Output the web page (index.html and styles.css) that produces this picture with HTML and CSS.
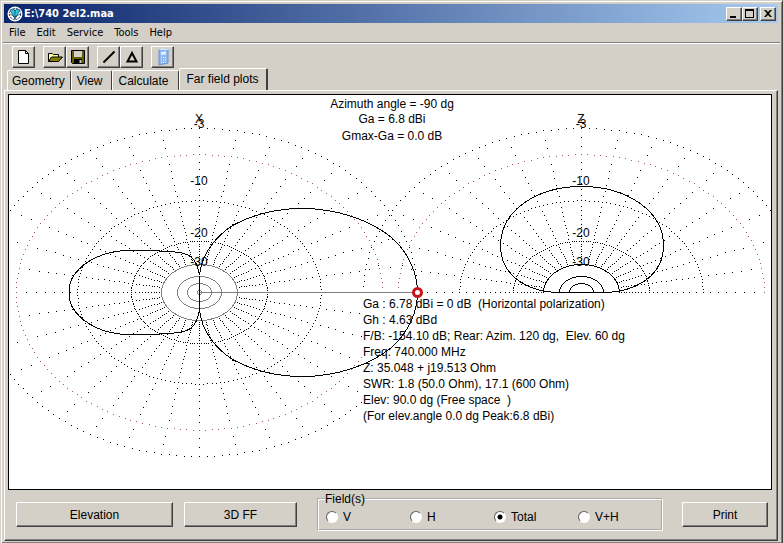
FILE: index.html
```html
<!DOCTYPE html>
<html lang="en">
<head>
    <meta charset="utf-8">
    <title>E:\740 2el2.maa</title>
    <link rel="stylesheet" href="styles.css">
</head>
<body>
<div class="window">
    <header class="titlebar">
        <svg class="app-icon" width="16" height="16" viewBox="0 0 16 16">
            <circle cx="8" cy="8" r="7.5" fill="#fff"/>
            <circle cx="8" cy="8" r="5.6" fill="none" stroke="#235" stroke-width="1" stroke-dasharray="2 1"/>
            <path d="M3 4l5 9 5-9-3-1-2 2-2-2z" fill="#2cc4e4" stroke="#145" stroke-width=".7"/>
            <path d="M8 3v10M3 8l5 3 5-3" fill="none" stroke="#145" stroke-width=".7"/>
        </svg>
        <h1>E:\740 2el2.maa</h1>
        <div class="window-buttons">
            <button type="button" aria-label="Minimize"><svg width="12" height="10"><path d="M2 7h6v2h-6z"/></svg></button>
            <button type="button" aria-label="Maximize"><svg width="12" height="10"><path fill-rule="evenodd" d="M1 0h9v9h-9zM2 2v6h7v-6z"/></svg></button>
            <button type="button" class="close" aria-label="Close"><svg width="12" height="10"><path d="M2 1h2l2 2 2-2h2l-3 3.5 3 3.500h-2l-2-2-2 2h-2l3-3.500z"/></svg></button>
        </div>
    </header>

    <nav class="menu">
        <button type="button">File</button>
        <button type="button">Edit</button>
        <button type="button">Service</button>
        <button type="button">Tools</button>
        <button type="button">Help</button>
    </nav>

    <div class="toolbar">
        <div class="group">
            <button type="button" aria-label="New"><svg width="16" height="16"><path d="M2.500 1.500h7l3 3v10h-10z" fill="#fff" stroke="#000"/><path d="M9.500 1.500v3h3" fill="none" stroke="#000"/></svg></button>
        </div>
        <div class="group">
            <button type="button" aria-label="Open"><svg width="16" height="16"><path d="M1.500 12.500v-8h4l1 1h5v3" fill="#ffffa0" stroke="#000"/><path d="M1.500 12.500l3-4.500h11l-4 4.500z" fill="#808000" stroke="#000"/></svg></button>
            <button type="button" aria-label="Save"><svg width="16" height="16"><path d="M1.500 1.500h13v13h-12l-1-1z" fill="#606000" stroke="#000"/><path d="M4 2h8v6h-8z" fill="#d4d0c8"/><path d="M4 10h8v4h-8z"/><path d="M9.500 11h2v3h-2z" fill="#d4d0c8"/></svg></button>
        </div>
        <div class="group">
            <button type="button" aria-label="Wire"><svg width="16" height="16"><path d="M2.500 13.500l11-11" stroke="#000" stroke-width="2"/></svg></button>
            <button type="button" aria-label="Loop"><svg width="16" height="16"><path d="M8 4l4.500 8.500h-9z" fill="none" stroke="#000" stroke-width="2"/></svg></button>
        </div>
        <div class="group">
            <button type="button" aria-label="Calculator"><svg width="16" height="18"><path d="M4 2l9-1v14l-9 2z" fill="#8fb8ee" stroke="#6890d0"/><path d="M4 2l2-1.500h8l-1 1.500z" fill="#d0e4ff"/><path d="M6 4l5-.5v3l-5 .5z" fill="#dff0ff"/><path d="M6 9.500h5M6 12h5M6 14.500h5" stroke="#e4f2ff" stroke-dasharray="1 1"/></svg></button>
        </div>
    </div>

    <div class="tabs" role="tablist">
        <button type="button" role="tab">Geometry</button>
        <button type="button" role="tab">View</button>
        <button type="button" role="tab">Calculate</button>
        <button type="button" role="tab" class="active" aria-selected="true">Far field plots</button>
    </div>

    <main class="page">
        <svg class="plot" viewBox="0 0 762 394">
            <!-- dotted dB grids, filled in by plot.js -->
            <g class="grid">
                <path id="gridDots"/>
                <path id="refDots" class="ref"/>
            </g>
            <rect class="info-bg" x="353" y="202" width="252" height="126"/>

            <!-- azimuth -->
            <g class="trace" transform="translate(190.500 197.500)">
                <g class="core">
                    <ellipse rx="38" ry="28"/>
                    <ellipse rx="22" ry="16"/>
                    <ellipse rx="12" ry="9"/>
                    <circle r="2"/>
                    <path d="M0 0H218"/>
                </g>
                <path d="M0-17V17"/>
                <path d="M0-17C2-40 18-57 33-67C55-79 78-84 103-84C136-84 170-73 192-55C210-39 218-18 218 0C218 18 210 39 192 55C170 73 136 84 103 84C78 84 55 79 33 67C18 57 2 40 0 17"/>
                <path d="M0-17C-1-24-4-32-9-36C-18-42-30-40-44-42C-62-43-82-43-96-38C-116-31-130-17-130-4V4C-130 17-116 31-96 38C-82 43-62 43-44 42C-30 40-18 42-9 36C-4 32-1 24 0 17"/>
            </g>

            <!-- elevation -->
            <g class="trace" transform="translate(572.500 197.500)">
                <path d="M-38 0A38 28 0 0 1 38 0M-22 0A22 16 0 0 1 22 0M-12 0A12 9 0 0 1 12 0"/>
                <path d="M-22 0C-50 0-81-14-81-47C-81-81-46-106 0-106C46-106 82-81 82-47C82-14 50 0 22 0Z"/>
            </g>

            <circle class="marker" cx="408.500" cy="197.500" r="4"/>

            <g class="label">
                <text x="190" y="28">X</text>
                <text x="190" y="33">-3</text>
                <text x="190" y="90">-10</text>
                <text x="190" y="142">-20</text>
                <text x="190" y="171">-30</text>
                <text x="572" y="28">Z</text>
                <text x="572" y="33">-3</text>
                <text x="572" y="90">-10</text>
                <text x="572" y="142">-20</text>
                <text x="572" y="171">-30</text>
                <text x="383" y="13">Azimuth angle = -90 dg</text>
                <text x="383" y="28">Ga = 6.8 dBi</text>
                <text x="383" y="45">Gmax-Ga = 0.0 dB</text>
            </g>

            <g class="info">
                <text x="354" y="213">Ga : 6.78 dBi = 0 dB  (Horizontal polarization)</text>
                <text x="354" y="229">Gh : 4.63 dBd</text>
                <text x="354" y="245">F/B: -154.10 dB; Rear: Azim. 120 dg,  Elev. 60 dg</text>
                <text x="354" y="261">Freq: 740.000 MHz</text>
                <text x="354" y="277">Z: 35.048 + j19.513 Ohm</text>
                <text x="354" y="293">SWR: 1.8 (50.0 Ohm), 17.1 (600 Ohm)</text>
                <text x="354" y="309">Elev: 90.0 dg (Free space  )</text>
                <text x="354" y="325">(For elev.angle 0.0 dg Peak:6.8 dBi)</text>
            </g>
        </svg>

        <div class="controls">
            <button type="button" class="btn wide">Elevation</button>
            <button type="button" class="btn">3D FF</button>
            <fieldset>
                <legend>Field(s)</legend>
                <label><input type="radio" name="field"> V</label>
                <label><input type="radio" name="field"> H</label>
                <label><input type="radio" name="field" checked> Total</label>
                <label><input type="radio" name="field"> V+H</label>
            </fieldset>
            <button type="button" class="btn small">Print</button>
        </div>
    </main>
</div>
<script src="plot.js"></script>
</body>
</html>
```
FILE: styles.css
```css
* {
    box-sizing: border-box;
}
body {
    margin: 0;
    background: #d4d0c8;
    color: #000;
    font: 12px "Liberation Sans", Arial, sans-serif;
}
button {
    margin: 0;
    padding: 0;
    background: #d4d0c8;
    color: #000;
    font: inherit;
    border: none;
}
.window {
    min-height: 100vh;
    padding: 2px;
    border: 1px solid #404040;
    border-top-color: #d4d0c8;
    border-left-color: #d4d0c8;
    box-shadow: inset 1px 1px #fff, inset -1px -1px #808080;
}

/* title bar */
.titlebar {
    display: flex;
    align-items: center;
    height: 19px;
    margin: 1px 2px 0 1px;
    padding: 0 2px 0 3px;
    background: linear-gradient(to right, #0a246a, #a6caf0);
}
.titlebar h1 {
    flex: 1;
    margin: 0 0 0 1px;
    color: #fff;
    font: bold 11px "DejaVu Sans Condensed", "DejaVu Sans", sans-serif;
}
.window-buttons {
    display: flex;
}
.window-buttons button {
    display: flex;
    align-items: center;
    justify-content: center;
    width: 16px;
    height: 14px;
    border: 1px solid #404040;
    border-top-color: #fff;
    border-left-color: #fff;
    box-shadow: inset -1px -1px #808080;
}
.window-buttons .close {
    margin-left: 2px;
}

.menu {
    display: flex;
    gap: 11px;
    height: 20px;
    padding-left: 6px;
    border-bottom: 1px solid #808080;
    box-shadow: 0 1px #fff;
}
.menu button {
    font: 11px "DejaVu Sans Condensed", "DejaVu Sans", sans-serif;
}

/* toolbar */
.toolbar {
    display: flex;
    gap: 8px;
    padding: 3px 0 0 9px;
}
.group {
    display: flex;
}
.toolbar button {
    display: flex;
    align-items: center;
    justify-content: center;
    width: 23px;
    height: 22px;
    border: 1px solid #404040;
    border-top-color: #fff;
    border-left-color: #fff;
    box-shadow: inset -1px -1px #808080;
}

/* tabs */
.tabs {
    display: flex;
    align-items: flex-end;
    height: 22px;
    padding-left: 4px;
}
.tabs button {
    height: 20px;
    padding: 0 9px 0 5px;
    border-top: 1px solid #fff;
    border-left: 1px solid #fff;
    border-right: 1px solid #404040;
    border-radius: 2px 2px 0 0;
}
.tabs button:first-child {
    padding: 0 5px 0 4px;
}
.tabs .active {
    height: 22px;
    padding: 0 7px 2px 7px;
    border-right-width: 2px;
}

.page {
    margin: 0 2px 0 1px;
    padding: 3px 5px 9px 3px;
    border: 1px solid #404040;
    border-top-color: #fff;
    border-left-color: #fff;
    box-shadow: inset -1px -1px #808080;
}

/* far field plot */
.plot {
    display: block;
    width: 100%;
    border: 1px solid #000;
    background: #fff;
}
.grid path {
    fill: #000;
    shape-rendering: crispEdges;
}
.grid .ref {
    fill: #a05060;
}
.info-bg {
    fill: #fff;
}
.trace {
    fill: none;
    stroke: #000;
    shape-rendering: crispEdges;
}
.core {
    stroke: #808080;
}
.marker {
    fill: #fff;
    stroke: #c8141e;
    stroke-width: 3;
}
.label {
    text-anchor: middle;
}
.info text {
    white-space: pre;
}

/* bottom row */
.controls {
    display: flex;
    align-items: flex-start;
    padding: 2px 4px 0 8px;
}
.btn {
    width: 113px;
    height: 25px;
    margin-top: 10px;
    border: 1px solid #404040;
    border-top-color: #fff;
    border-left-color: #fff;
    box-shadow: inset -1px -1px #808080;
}
.btn.wide {
    width: 157px;
    margin-right: 11px;
}
.btn.small {
    width: 86px;
}
fieldset {
    display: grid;
    flex: 1;
    grid-template-columns: repeat(4, 84px);
    min-width: 0;
    height: 39px;
    margin: 0 19px 0 20px;
    padding: 3px 8px 0 7px;
    border: 2px groove #fff;
}
legend {
    margin-left: -1px;
    padding: 0;
    line-height: 14px;
}
fieldset label {
    display: flex;
    align-items: center;
    gap: 5px;
    height: 16px;
}
input[type=radio] {
    appearance: none;
    width: 12px;
    height: 12px;
    margin: 0;
    border: 1px solid #fff;
    border-top-color: #606060;
    border-left-color: #606060;
    border-radius: 50%;
    background: #fff;
}
input[type=radio]:checked {
    background: radial-gradient(circle, #000 2px, #fff 3px);
}
```
FILE: plot.js
```js
// ARRL log scale: radius shrinks by 0.89 every 2 dB
function scale(db) {
    return Math.pow(0.89, db / 2);
}

var RX = 218, RY = 164;
var dots = '', ref = '';

function dot(cx, cy, db, deg) {
    var a = deg * Math.PI / 180;
    var x = Math.round(cx + RX * scale(db) * Math.cos(a));
    var y = Math.round(cy - RY * scale(db) * Math.sin(a));
    return 'M' + x + ' ' + y + 'h1v1h-1z';
}

function grid(cx, cy, sweep) {
    for (var a = 0; a <= sweep; a += 2) {
        dots += dot(cx, cy, 0, a) + dot(cx, cy, 10, a) + dot(cx, cy, 20, a);
        ref += dot(cx, cy, 3, a);
    }
    for (var r = 0; r <= sweep; r += 10) {
        for (var db = 1; db < 30; db++) {
            dots += dot(cx, cy, db, r);
        }
    }
}

grid(190, 197, 360);
grid(572, 197, 180);

document.getElementById('gridDots').setAttribute('d', dots);
document.getElementById('refDots').setAttribute('d', ref);
```
